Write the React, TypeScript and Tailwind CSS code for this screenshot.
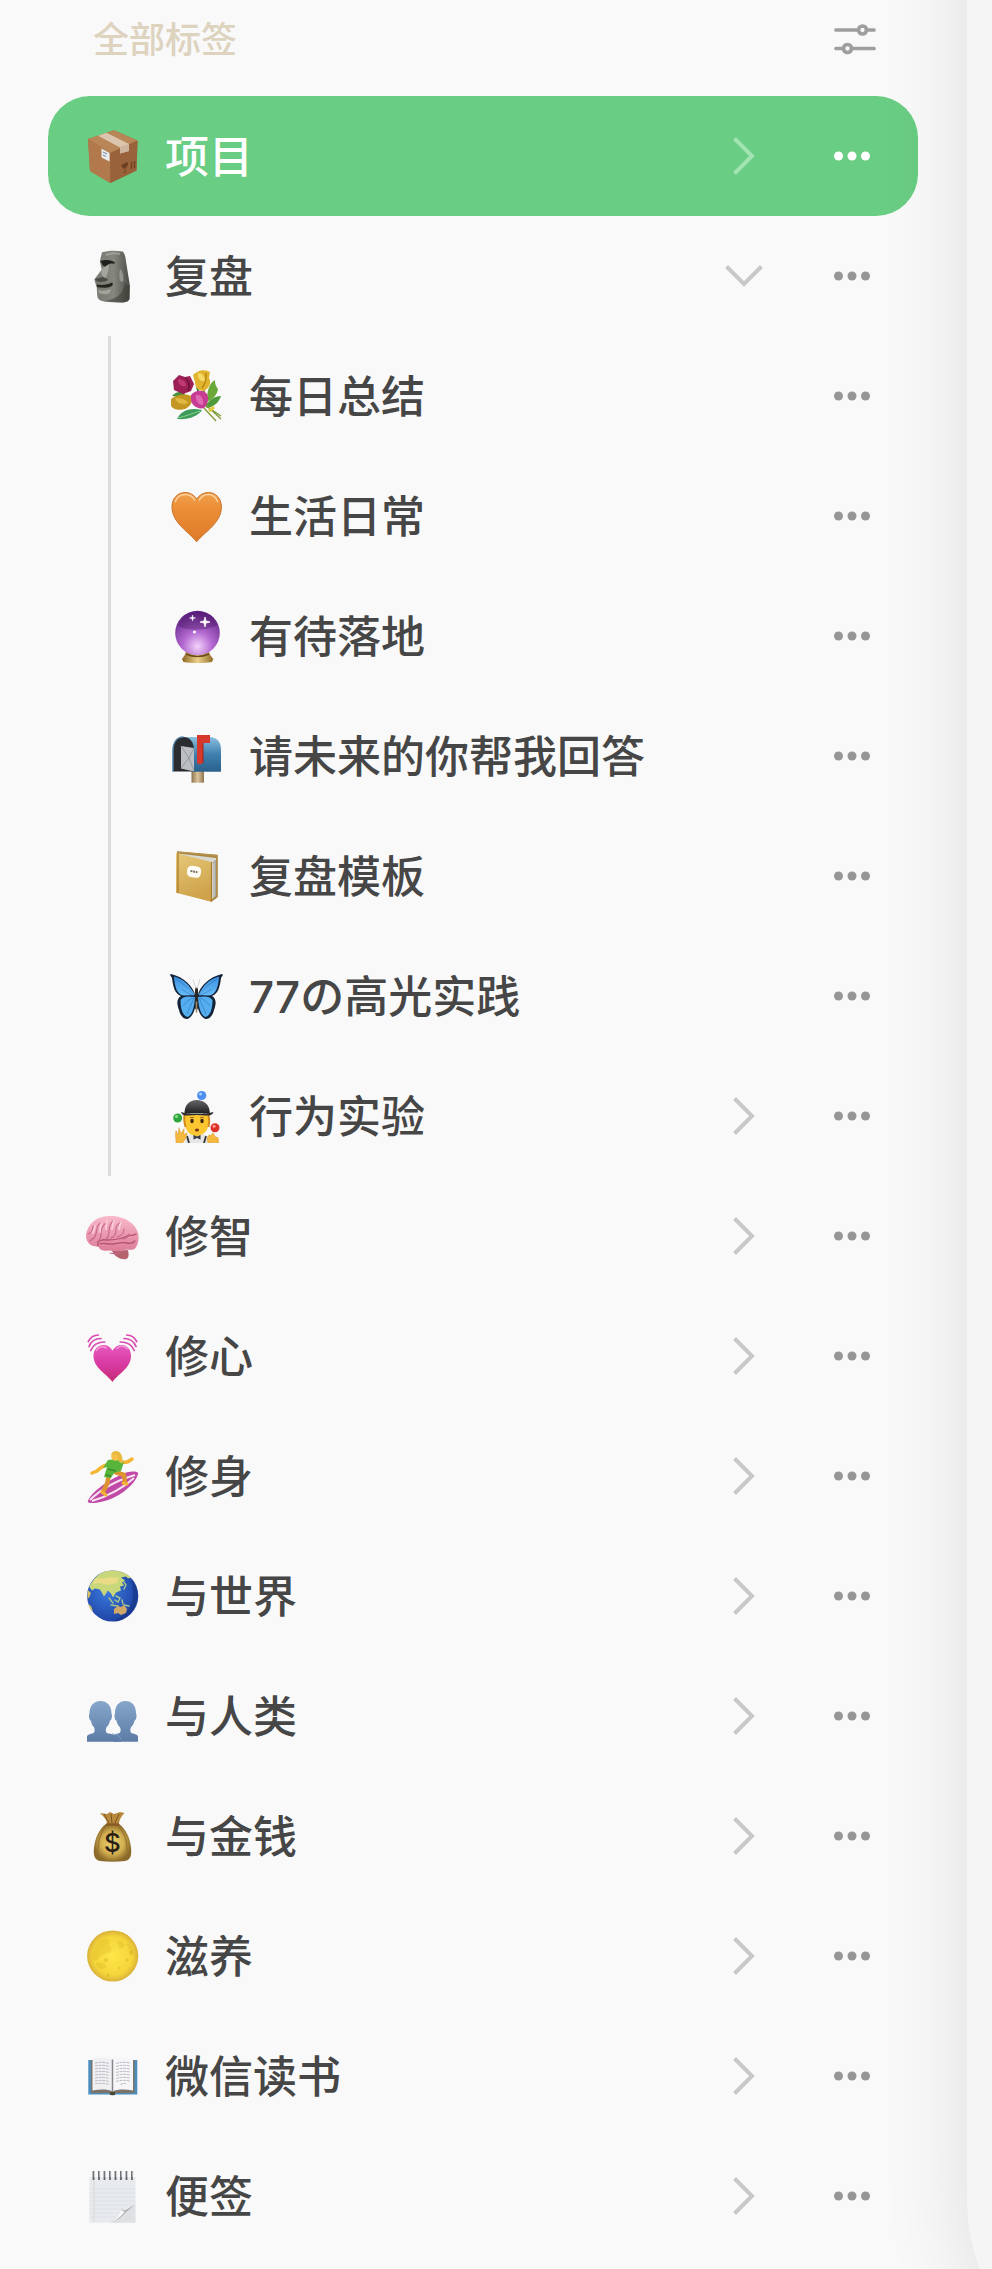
import React, { useState } from 'react';

type IconProps = { className?: string };

type Tag = {
  id: string;
  name: string;
  icon: React.ReactNode;
  expandable?: boolean;
  children?: Tag[];
};

const PackageIcon = () => (
  <>
    <path d="M2 10 28 1.3 51.5 11.5 50.5 41.5 24.300 54 4 42Z" fill="#a06a42" />
    <path d="M2 10 28 1.3 51.5 11.5 24.3 24Z" fill="#b98658" />
    <path d="M2 10 24.3 24V54L4 42Z" fill="#b27a4c" />
    <path d="M24.3 24 51.5 11.5 50.5 41.5 24.3 54Z" fill="#99623a" />
    <path d="m12 6.800 8.500-3L43 15v7l-9 2.500v-6Z" fill="#dcc5ad" />
    <path d="m34 18 9-3v7l-9 2.500Z" fill="#cdb49b" />
    <path d="m15.500 19.500 8 4.500v8.500l-8-4Z" fill="#e9ecf0" />
    <path d="m17 23 4 2m-4 1 3 1.500" stroke="#8795a8" strokeWidth="1.200" />
    <path d="m36 36 5.500-2.500c0 3.500-1 5-2.700 5.500s-2.800-1-2.800-3Zm3 3v4.500m-1.500.7 3-1.400" fill="#6b3f22" stroke="#6b3f22" strokeWidth=".8" />
    <path d="M45.500 33v7m3-8v7" stroke="#6b3f22" strokeWidth="1.300" />
  </>
);

const MoaiIcon = () => (
  <>
    <path d="M16 3.300c6-2 14-2 20.500-.7 2.500 2 3 6 3.500 10l3.800 23.500-.3 14c-1.500 3-4 3.400-7 3.400-7 0-14 0-20.500-1.500-3-1-4.500-2.500-4.700-5l-.5-8-2.500-8.500 7.500-10-2-8Z" fill="url(#stone)" />
    <path d="M14.500 12c6-2 10-1 14 1v2c-4-1-5-.5-6 1.500-2 2-4 1.500-6-.5Z" fill="#1f201d" />
    <path d="M23 15c0 7-2 11-4 15l-3-4-1-3 2-4Z" fill="#a3a59e" />
    <path d="m9 30 8-2c2 1 4 1 5 3-3 2-8 2.500-11 1.500Z" fill="#4a4b45" />
    <path d="M11 35.500c5 1 11 0 15-2 2 2 0 3.500-2 4.500-3 1-9 1-13 0Z" fill="#24251f" />
    <path d="M12 41c6 1.500 10 0 13-1l-1 4c-4 2-8 1-11 0Z" fill="#a2a399" />
    <path d="M34 20c3 2 4 8 3 13l-3-1c-1-4-1-8 0-12Z" fill="#93958f" />
    <path d="M39 34c2 3 3 3 4.800 2l-.3 14c-2 4-8 3.500-12 3.300l-15-1C28 51 37 47 39 34Z" fill="#34352e" opacity=".5" />
    <path d="M20 6c5-2 10-2 14-1" stroke="#a9aba5" strokeWidth="2" fill="none" opacity=".7" />
  </>
);

const BouquetIcon = () => (
  <>
    <path d="M37 31c0-8 2-17 8-20 0 5 1 6 3 9-1 6-5 10-11 13Z" fill="#6aa83a" />
    <path d="M35 37c4-6 10-10 16-10-2 6-7 11-14 12Z" fill="#4f9a3a" />
    <path d="M2 27c3-4 8-5 12-4l2 6Z" fill="#4a8f3c" />
    <path d="M7 50c4-8 12-12 25-9-4 6-13 10-25 9Z" fill="#3d9c5c" />
    <path d="M8 49c8-2 13-4 22-7" stroke="#8fd08a" fill="none" />
    <path d="m33 38 13 14m-10-15 15 10m-15-11 15 14" stroke="#7f9b34" strokeWidth="1.300" />
    <path d="m39 42 5-4" stroke="#e3c93c" strokeWidth="3" />
    <path d="M27 18l4 14m3-12-1 10" stroke="#3f7f33" strokeWidth="2" />
    <path d="M3 12 9 6l6 2 5-1 4 8-3 7-8 3-9-4Z" fill="#9c1f56" />
    <path d="M8 10c4 0 8 2 8 7-4 1-8-1-8-7Z" fill="#c23a73" />
    <path d="M15 9c4 3 5 8 3 13" stroke="#6d103a" strokeWidth="1.500" fill="none" />
    <path d="M23 6c5-5 11-6 17-3l-1 6c3 5 0 10-5 13-6 0-9-4-9-9Z" fill="#e0b42f" />
    <path d="M28 4c4 0 7 3 7 8-4 1-8-2-7-8Z" fill="#f4d865" />
    <path d="M36 4c0 6 0 10-4 15" stroke="#b8860f" strokeWidth="1.400" fill="none" />
    <path d="M1 30c5-4 13-6 20-3 3 5-1 11-6 13-6 2-14 0-14-4Z" fill="#c49622" />
    <path d="M5 29c5 0 11 1 13 5-5 2-11 1-13-5Z" fill="#e0b843" />
    <path d="M21 26c4-5 12-6 16-1 2 5 1 10-3 14-7 2-13-4-13-8Z" fill="#c63c93" />
    <path d="M26 26c5-1 8 4 7 10-5 0-8-5-7-10Z" fill="#e069b4" />
  </>
);

const OrangeHeartIcon = () => (
  <>
    <path d="M26.700 52.700C19 43 2 34 2 18 2 9 8 3.500 15 3.500c5 0 9 2.500 11.700 6.500 2.700-4 6.700-6.500 11.700-6.500 7 0 13 5.500 13 14.500 0 16-17 25-24.700 34.700Z" fill="url(#orangeHeart)" stroke="#c9732a" strokeWidth="1" />
    <path d="M5 13C7 8 11 5.500 15 5.500c4.500 0 8 2 10 6M29 11.500c2-4 5-6 9.500-6 4.500 0 7.500 3 9.500 7.500" fill="none" stroke="#fbd09b" strokeWidth="1.500" />
  </>
);

const CrystalBallIcon = () => (
  <>
    <path d="M12 50c2-3 4-5 4-8h23c0 3 2 5 4.300 8l-1.300 3c-9 1.300-20 1.300-28.500 0Z" fill="url(#gold)" />
    <circle cx="27.500" cy="24" r="22.300" fill="url(#orb)" />
    <path d="M8 17C12 6 20 3 28 3s15 3 19 13c-8 5-28 7-39 1Z" fill="#3c0d52" opacity=".3" />
    <path d="m35 8 1 4 4 1-4 1-1 4-1-4-4-1 4-1Z" fill="#fff" stroke="#fff" strokeWidth=".8" />
    <path d="m22.500 6 .6 2.400 2.400.6-2.400.6-.6 2.400-.6-2.400-2.400-.6 2.400-.6Z" fill="#fff" stroke="#fff" strokeWidth=".5" />
    <circle cx="24.500" cy="23" r="1.600" fill="#fff" />
    <path d="M16 45c7 3 16 3 23 0" stroke="#6b4a16" strokeWidth="1.500" fill="none" />
  </>
);

const MailboxIcon = () => (
  <>
    <path d="M21.500 42h12.500v11.700H21.500Z" fill="url(#wood)" />
    <path d="M13 8h26c8 0 12 5 12 13v21.700H22Z" fill="url(#mail)" />
    <path d="M3 42.500V22C3 13 7 8 13.500 8S24 13 24 22v20.500Z" fill="#2a2c2f" />
    <path d="M3 42.500V22C3 13 7 8 13.500 8" stroke="#4f7fa5" strokeWidth="1.500" fill="none" />
    <path d="M11 17 24 19v23.500l-13-3Z" fill="#bcbfc2" />
    <path d="m11 17 8 12-8 10M24 19l-5 10 5 13" stroke="#8d9196" strokeWidth=".8" fill="none" />
    <path d="M27 6h13v8h-7v20l-3 1.500-3-1.500Z" fill="#d6392b" />
    <path d="M33 14v20" stroke="#a32219" fill="none" />
  </>
);

const NotebookIcon = () => (
  <>
    <path d="M7 2.500 47.500 6v42.300l-6 4.400L8 43Z" fill="#a98642" />
    <path d="m8 4.500 38 4.500v37.500L41 51Z" fill="#d9d9d4" />
    <path d="m42.500 14 3-2.500v36m-1.500-35v36" stroke="#9b9b96" fill="none" strokeWidth=".8" />
    <path d="m6 4 35.700 9v39.700L6 43.700Z" fill="url(#cover)" />
    <path d="M8 4.500v39.500M41.500 13v39.500" stroke="#a97b2b" strokeWidth="1.200" />
    <path d="M7 3 47 6.500v41.800" stroke="#b4914c" strokeWidth="1.500" fill="none" />
    <rect x="17" y="17" width="14" height="11.500" rx="4.500" fill="#fffdf6" transform="rotate(8 24 23)" />
    <path d="m20.500 22 7 1.200" stroke="#77736a" strokeWidth="2" strokeDasharray="2 .7" />
  </>
);

const ButterflyIcon = () => (
  <>
    <path d="M25.500 27C23 17 14 8 1 5c-2 1 0 2 1 4 1 9 3 16 9 18-5 3-4 9-2 14 1 5 4 9 8 9 5-1 9-9 9.500-21Zm2 0C30 17 39 8 52 5c2 1 0 2-1 4-1 9-3 16-9 18 5 3 4 9 2 14-1 5-4 9-8 9-5-1-9-9-9.500-21Z" fill="#142237" />
    <path d="M25 26C20 17 14 10 4 7.500 4.500 17 7 26 14 26.500Zm3.500 0C33 17 39 10 49 7.500 48.500 17 46 26 39 26.500Z" fill="url(#wing)" />
    <path d="M25 28c-7-1-12-1-14.500 3 0 8 2 16 7 17 4-1 7-9 7.500-20Zm3 0c7-1 12-1 14.500 3 0 8-2 16-7 17-4-1-7-9-7.500-20Z" fill="#55aef0" />
    <path d="M24 26C18 19 13 14 6 10m18 17c-6-3-9-4-12-7m12 9c-3 7-5 11-7 16m6-16c-5 2-7 4-10 8M29 26c6-7 11-12 18-16M29 27c6-3 9-4 12-7M29 29c3 7 5 11 7 16m-6-16c5 2 7 4 10 8" stroke="#2f74b4" strokeWidth=".6" fill="none" />
    <path d="M26.500 20v19" stroke="#2b2924" strokeWidth="3" strokeLinecap="round" />
    <path d="M26.500 33v10" stroke="#9b8b6b" strokeWidth="1.500" strokeLinecap="round" />
    <path d="m26 20-3-10m4 10 3-10" stroke="#b5bcbe" strokeWidth=".6" />
  </>
);

const JugglerIcon = () => (
  <>
    <path d="M15 54c0-6 2-8 7-9h10c5 1 7 3 7 9Z" fill="#e6e6e6" />
    <path d="m17 47 2 7m17-7-2 7" stroke="#333" strokeWidth="1.800" />
    <path d="M15 25h23.500v9c0 8-6 13-12 13S15 42 15 34Z" fill="#fbc62f" />
    <path d="M14.500 26c-1 4 0 8 1 12M38.500 26c1 4 1 8 0 12" stroke="#d28a1c" strokeWidth="2" fill="none" />
    <path d="M14.500 24c0-8 5-13 12.300-13s13 5 13 13Z" fill="url(#hat)" />
    <path d="M11 23c5 2 26 2 32.500 0-1 3-4 4-8 3.500-6-.7-12-.7-17 0-4 .5-6.500-.5-7.500-3.500Z" fill="#2d2d2f" />
    <ellipse cx="22" cy="32" rx="1.700" ry="2.300" fill="#3b2413" />
    <ellipse cx="32" cy="32" rx="1.700" ry="2.300" fill="#3b2413" />
    <path d="M20 29q2-1.500 4 0m6 0q2-1.500 4 0" stroke="#9c6417" fill="none" />
    <ellipse cx="27" cy="41" rx="2" ry="1.500" fill="#7c2f1a" />
    <path d="m23.500 46 3.500 1.500 3.500-1.500v4.500L27 49l-3.500 1.500Z" fill="#3a3b40" />
    <path d="M6 53.700c0-5-1-9 0-12l2 4 1-7 2 6 3-5v6l3-2c0 5-3 8-4 10Zm32 0c-1-3-1-7 2-8l1 1 2-3 2 4 3 1 .7 5Z" fill="#f5b93e" stroke="#d99328" strokeWidth=".5" />
    <circle cx="31.700" cy="6.500" r="4.600" fill="#4d8ff0" />
    <circle cx="7.700" cy="29" r="4.500" fill="#2fa53e" />
    <circle cx="45" cy="38.700" r="4.500" fill="#dc3129" />
    <circle cx="30.500" cy="5" r="1.500" fill="#a9ccff" />
    <circle cx="6.500" cy="27.500" r="1.500" fill="#8ee08f" />
    <circle cx="44" cy="37.200" r="1.500" fill="#ff9d95" />
  </>
);

const BrainIcon = () => (
  <>
    <path d="M26 42c3 6 9 9 14 8 3-1 3-4 2-9Z" fill="#b5626f" />
    <path d="M0 26C2 14 11 7 24 7c15 0 27 8 28.500 19 .5 6-1 11-4 14-3 1-5 1-8 .5-6 2-12 2-17 1-5 1-10 0-11-4-5 0-9-1-11-5C.5 31 0 29 0 26Z" fill="url(#brain)" />
    <path d="M12 37c-1-5 4-7 9-6 8 0 14-1 20-4 4-1 7 0 9-2M14 35c5-2 9 1 14 0s9-2 13-1 6 0 8-2" stroke="#b5536f" strokeWidth="1.300" fill="none" strokeLinecap="round" />
    <path d="M2 25c3-1 5-4 5-8m-3 15c3-2 5-3 6-7 1-5 0-7 4-11m-3 19c3-2 4-4 4-8s1-8 5-11m-1 17c3-2 4-5 4-9s1-7 4-10m-2 17c4-1 5-5 5-9 0-3 2-5 4-6m-3 14c4-1 7-4 7-8m-2 10c4 0 6-2 7-5m-19 19c4 1 8 1 11-1" stroke="#c4678a" strokeWidth="1.100" fill="none" strokeLinecap="round" />
    <path d="M9 17c0 3-2 4-2 7m8-9c-1 4-1 5-1 8m7-11c-1 3-1 5-1 8m8-8c-2 3-1 5-2 8m9-6c-2 2-1 4-2 6" stroke="#ffd6df" strokeWidth="1.800" fill="none" strokeLinecap="round" opacity=".8" />
  </>
);

const BeatingHeartIcon = () => (
  <>
    <path d="M26.500 53C21 45 7.500 39 7.500 27 7.500 20 12 16 17.500 16c4 0 7 2 9 5.500 2-3.500 5-5.500 9-5.500C41 16 45 20 45 27c0 12-13 18-18.500 26Z" fill="url(#pinkHeart)" />
    <path d="M10.500 21.500c2-4 6-4.500 9.500-2.500m11 .5c3-3 7-3 10 0" stroke="#f29ad6" strokeWidth="1.500" fill="none" strokeLinecap="round" />
    <path d="M2.300 12.500c2-4 5-6.500 10-6.500M3 17.500c2-5 6-8 12-8M4.700 21.500c2-5 7-8.500 14-8.500M50.700 12.500c-2-4-5-6.500-10-6.500m9.300 11.500c-2-5-6-8-12-8m10.300 12c-2-5-7-8.500-14-8.500" stroke="#d94bb0" strokeWidth="1.700" fill="none" strokeLinecap="round" />
  </>
);

const SurferIcon = () => (
  <>
    <path d="M1.700 53c2-8 18-21 35-28 7-3 13-3 15.600-1C51 31 42 42 27 49c-11 5-23 6-25.300 4Z" fill="#c04aa6" />
    <path d="M4 51c9-9 25-19 45-25M6 52c13-4 30-12 42-23" stroke="#f7e3f1" strokeWidth="2" fill="none" />
    <path d="M24 15c-6 1-10 4-13 7l-5 2M36 13c4 1 6 0 10-3" stroke="#f4b533" strokeWidth="3.500" strokeLinecap="round" fill="none" />
    <path d="m23 26-2 9-4 8m12-20 9 3 1 8" stroke="#dd9430" strokeWidth="4.500" strokeLinecap="round" strokeLinejoin="round" fill="none" />
    <path d="m22 11 8-1 8 3-3 9-7 2-3 5-7-1 3-10-4 1Z" fill="#58b53c" />
    <path d="m22 20 8 2m-10 4 5 1" stroke="#3a8b2a" strokeWidth="1.300" />
    <circle cx="29.500" cy="7.500" r="4.300" fill="#f8c24a" />
    <path d="M25 6c1-5 8-5 10-1 2 3 1 6 2 9-4 1-5-3-5-7-2-2-4-2-7-1Z" fill="#e8b93f" />
    <path d="m16 43 4 3m17-12 4 1" stroke="#f4b533" strokeWidth="3" strokeLinecap="round" />
  </>
);

const GlobeIcon = () => (
  <>
    <circle cx="26.700" cy="27" r="25.600" fill="url(#sea)" />
    <path d="M4 16C10 5 19 1 28 1.500c7 .5 13 3 17 7l-3 1-2-2-5 1 4 3-3 2 2 3-4 1 1 4-5 2-3 5-2-4-3-3-4 6-4-7-5-1-3 2-3-4Z" fill="#c9d77b" />
    <path d="M9 10c6-2 9 1 14-2l10 1-2 5-9 2-9-2-6 1Z" fill="#eadb86" />
    <path d="M1.800 21 5 24l-2 5-1.500-.5ZM2 35l3 2 2 5-2-1Z" fill="#d7bf63" />
    <path d="m38 13 2 3-2 4m-15 9 4 5m3-7 4 2-2 4-3-2m7 0 1 4m-12 1 7 1m6-1 5 1" stroke="#a8c489" strokeWidth="1.400" fill="none" strokeLinecap="round" />
    <path d="m28 40 4-3 3 1 3-2 3 4-1 4-5 2-3-2-4 1Z" fill="#d2a869" />
    <path d="M45 8.500c5 5 7 12 6.500 19-1 14-12 25-25 25 10-4 19-12 20-23 1-8 0-15-1.500-21Z" fill="#14296e" opacity=".4" />
  </>
);

const PeopleIcon = () => (
  <>
    <path d="M52 52.700V47.500c0-1.500-3-2.500-6-3.200-2-.6-2-4-1-6 2-2 3-4 3.500-6.500 2-1 2.500-5 1.500-7.500 0-7.500-4-12.300-10.500-12.300S29 16.800 29 24.300c-1 2.500-.5 6.500 1.500 7.500.5 2.500 1.500 4.500 3.500 6.500 1 2 1 5.400-1 6-3 .7-6 1.700-6 3.200v5.200Z" fill="url(#person)" />
    <path d="M1 52.700V47.500c0-1.500 3-2.500 6-3.200 2-.6 2-4 1-6-2-2-2.500-4-3-6.500-2-1-2.500-5-1.500-7.500 0-7.500 4.500-12.300 11-12.300s11 4.800 11 12.300c1 2.500.5 6.500-1.500 7.500-.5 2.500-1.500 4.500-3.500 6.500-1 2-1 5.400 1 6 6 .7 10 2.700 12 3.700 1.500 1 1.500 2.500 1.500 4.700Z" fill="url(#person)" />
    <path d="M26 44.800c5 .7 8 2 9 6" stroke="#8aa5c6" strokeWidth=".8" fill="none" />
  </>
);

const MoneyBagIcon = () => (
  <>
    <path d="m14 4 7 1 3-2 4 2 6-2 4.500 1C35 8 33 11 33 15H21c0-4-3-7-7-11Z" fill="#b98a3d" />
    <path d="m18 5 5 9m2-9 1 9m7-9-4 9" stroke="#7d5522" strokeWidth="1" />
    <path d="M20 15h13c7 5 11 14 12 24 1 8-1 12-6 13-8 1-17 1-25 0-5-1-7-5-6-13 1-10 5-19 12-24Z" fill="url(#bag)" />
    <path d="M20 17c-5 6-8 15-8 26m20-26c6 6 9 14 9 25" stroke="#8b6726" strokeWidth=".8" fill="none" />
    <path d="M21 15.500h11" stroke="#8a5a25" strokeWidth="2.500" strokeLinecap="round" />
    <text x="26.500" y="43" textAnchor="middle" fontFamily="Inter, sans-serif" fontWeight="500" fontSize="26" fill="#2b2117">$</text>
  </>
);

const MoonIcon = () => (
  <>
    <circle cx="26.700" cy="27" r="25.600" fill="url(#moon)" />
    <path d="M9 19c3-7 8-10 13-9 3 3 0 5 2 8 4 2 1 6-3 6-3 3-6 1-8 5s-6 3-7-2Zm22-6c4-3 7 0 8 4l-5 3Zm9 1c5 2 7 6 8 11l-4-2Zm-30 20c5-2 9 0 11 4l-4 2c-4 0-7-2-7-6Z" fill="#c99e1b" opacity=".2" />
    <g fill="#b98c12" opacity=".25">
      <circle cx="41" cy="31" r="1.500" />
      <circle cx="45" cy="24" r="2" />
      <circle cx="22" cy="46" r="1.500" />
      <circle cx="33" cy="39" r="1" />
      <circle cx="20" cy="31" r="2" />
    </g>
  </>
);

const BookIcon = () => (
  <>
    <path d="M2.300 11h49v34.500H30l-3.500 1-3.500-1H2.300Z" fill="#4b8dbd" />
    <path d="M5 11h43.500v33H30l-3.500 2-3.500-2H5Z" fill="#7c746b" />
    <path d="M6.500 9.500C14 8 22 8 26.500 10.500v32C22 40 14 40 6.500 41.500Z" fill="#f0f0f3" />
    <path d="M47 9.500C39.500 8 31.500 8 26.500 10.500v32C31.500 40 39.500 40 47 41.500Z" fill="#f6f6f8" />
    <path d="M26.500 10.500v32" stroke="#85858a" strokeWidth="1.500" />
    <path d="M9 14c5-1 9-1 14 .5M9 17c5-1 9-1 14 .5M9 20c5-1 9-1 14 .5M9 23c5-1 9-1 14 .5M9 26c5-1 9-1 14 .5M9 29c5-1 9-1 14 .5M9 32c5-1 9-1 14 .5M9 35c5-1 9-1 14 .5m7-21c5-1.500 9-1.500 14-.5m-14 3.500c5-1.500 9-1.500 14-.5m-14 3.500c5-1.500 9-1.500 14-.5m-14 3.500c5-1.500 9-1.500 14-.5m-14 3.500c5-1.500 9-1.500 14-.5m-14 3.500c5-1.500 9-1.500 14-.5m-14 3.500c5-1.500 9-1.500 14-.5m-10 3.500c3-1 4-1 6-1" stroke="#b4b5c0" strokeWidth=".9" fill="none" strokeDasharray="3 .6" />
    <path d="M24 43h5v3h-5Z" fill="#4e4a2f" />
  </>
);

const NotepadIcon = () => (
  <>
    <path d="M3.500 8h46v28L32 53.700H3.500Z" fill="#e8ebee" />
    <path d="M8 8v45" stroke="#dccfd3" strokeWidth=".8" />
    <path d="M3.500 20h46m-46 4h46m-46 4h46m-46 4h46m-46 4h42m-42 4h33m-33 4h31m-31 4h26" stroke="#d8dde3" strokeWidth=".7" />
    <path d="M26 53.700c6-3 9-6 12-10 3-3 7-5 11.500-8v18Z" fill="#dfe0e3" />
    <path d="M24 53.700c8-4 9-10 12-15 1 3 2 3 4 2 4-2 7-4 9.500-8-2 4-5 7-9 10-4 4-8 9-16.500 11Z" fill="#b0b2b6" />
    <path d="M24 53.700c8-4 9-10 12-15 0 3 1 4 3 4-4 4-8 9-15 11Z" fill="#f7f7f8" />
    <path d="M7.500 2v9m5.500-9v9m5.500-9v9m5.500-9v9m5.500-9v9m5.500-9v9m5.500-9v9m5.500-9v9" stroke="#606368" strokeWidth="1.800" />
    <path d="M8.300 2v6m5.500-6v6m5.500-6v6m5.500-6v6m5.500-6v6m5.500-6v6m5.500-6v6m5.500-6v6" stroke="#d8dade" strokeWidth=".8" />
  </>
);

const tags: Tag[] = [
  { id: 'project', name: '项目', icon: <PackageIcon />, expandable: true },
  {
    id: 'review',
    name: '复盘',
    icon: <MoaiIcon />,
    expandable: true,
    children: [
      { id: 'daily', name: '每日总结', icon: <BouquetIcon /> },
      { id: 'life', name: '生活日常', icon: <OrangeHeartIcon /> },
      { id: 'pending', name: '有待落地', icon: <CrystalBallIcon /> },
      { id: 'future', name: '请未来的你帮我回答', icon: <MailboxIcon /> },
      { id: 'template', name: '复盘模板', icon: <NotebookIcon /> },
      { id: 'highlight', name: '77の高光实践', icon: <ButterflyIcon /> },
      { id: 'experiment', name: '行为实验', icon: <JugglerIcon />, expandable: true },
    ],
  },
  { id: 'wisdom', name: '修智', icon: <BrainIcon />, expandable: true },
  { id: 'heart', name: '修心', icon: <BeatingHeartIcon />, expandable: true },
  { id: 'body', name: '修身', icon: <SurferIcon />, expandable: true },
  { id: 'world', name: '与世界', icon: <GlobeIcon />, expandable: true },
  { id: 'people', name: '与人类', icon: <PeopleIcon />, expandable: true },
  { id: 'money', name: '与金钱', icon: <MoneyBagIcon />, expandable: true },
  { id: 'nourish', name: '滋养', icon: <MoonIcon />, expandable: true },
  { id: 'weread', name: '微信读书', icon: <BookIcon />, expandable: true },
  { id: 'notes', name: '便签', icon: <NotepadIcon />, expandable: true },
];

// Gradients shared by the tag icons
function Gradients() {
  return (
    <svg className="absolute size-0" aria-hidden="true">
      <defs>
        <linearGradient id="stone"><stop stopColor="#777970" /><stop offset=".55" stopColor="#85877f" /><stop offset="1" stopColor="#4b4c46" /></linearGradient>
        <linearGradient id="orangeHeart" x2="0" y2="1"><stop stopColor="#f0a04c" /><stop offset=".3" stopColor="#ec8f38" /><stop offset="1" stopColor="#de7a28" /></linearGradient>
        <radialGradient id="orb" cy=".8" r=".8"><stop stopColor="#f3d3fa" /><stop offset=".4" stopColor="#b56bd2" /><stop offset="1" stopColor="#5d1f82" /></radialGradient>
        <linearGradient id="gold"><stop stopColor="#8a6420" /><stop offset=".5" stopColor="#ecd28c" /><stop offset="1" stopColor="#8f6a25" /></linearGradient>
        <linearGradient id="wood"><stop stopColor="#8d7350" /><stop offset=".5" stopColor="#dcc59c" /><stop offset="1" stopColor="#8d7350" /></linearGradient>
        <linearGradient id="mail" x2="0" y2="1"><stop stopColor="#8cbfe0" /><stop offset=".5" stopColor="#3f80ae" /><stop offset="1" stopColor="#2a608c" /></linearGradient>
        <linearGradient id="cover" x2=".3" y2="1"><stop stopColor="#e6c878" /><stop offset="1" stopColor="#cfa24b" /></linearGradient>
        <linearGradient id="wing" x2="0" y2="1"><stop stopColor="#3b8fe0" /><stop offset="1" stopColor="#66bdf8" /></linearGradient>
        <linearGradient id="hat" x2="0" y2="1"><stop stopColor="#66666a" /><stop offset="1" stopColor="#222224" /></linearGradient>
        <linearGradient id="brain" x2="0" y2="1"><stop stopColor="#f9b9ca" /><stop offset="1" stopColor="#dc7d98" /></linearGradient>
        <linearGradient id="pinkHeart" x2="0" y2="1"><stop stopColor="#e65ac0" /><stop offset=".5" stopColor="#d93ba4" /><stop offset="1" stopColor="#c42a72" /></linearGradient>
        <radialGradient id="sea" cx=".4" cy=".4" r=".65"><stop stopColor="#3c7be0" /><stop offset="1" stopColor="#1c40a0" /></radialGradient>
        <linearGradient id="person" x2="0" y2="1"><stop stopColor="#86a7ca" /><stop offset="1" stopColor="#5c7ba6" /></linearGradient>
        <radialGradient id="bag"><stop stopColor="#ecd373" /><stop offset=".6" stopColor="#d3b050" /><stop offset="1" stopColor="#8b6a2a" /></radialGradient>
        <radialGradient id="moon"><stop stopColor="#ffe648" /><stop offset=".75" stopColor="#f5d63a" /><stop offset="1" stopColor="#d9b13a" /></radialGradient>
      </defs>
    </svg>
  );
}

function Chevron({ className }: IconProps) {
  return (
    <svg viewBox="0 0 40 40" fill="none" stroke="currentColor" strokeWidth="4" className={className}>
      <path d="M10.500 2.500 28 20 10.500 37.500" />
    </svg>
  );
}

function Dots({ className }: IconProps) {
  return (
    <svg viewBox="0 0 36 36" fill="currentColor" className={className}>
      <circle cx="4.500" cy="18" r="4.500" />
      <circle cx="18" cy="18" r="4.500" />
      <circle cx="31.500" cy="18" r="4.500" />
    </svg>
  );
}

function FilterIcon({ className }: IconProps) {
  return (
    <svg viewBox="0 0 42 32" fill="none" stroke="currentColor" strokeWidth="3.700" strokeLinecap="round" className={className}>
      <path d="M2 7h22m9 0h7M2 25.500h7m9 0h22" />
      <circle cx="28.500" cy="7" r="4" />
      <circle cx="13.500" cy="25.500" r="4" />
    </svg>
  );
}

type RowProps = {
  tag: Tag;
  selectedId: string;
  openIds: string[];
  onSelect: (id: string) => void;
  onToggle: (id: string) => void;
};

function TagRow({ tag, selectedId, openIds, onSelect, onToggle }: RowProps) {
  const isSelected = tag.id === selectedId;
  const isOpen = openIds.includes(tag.id) && !!tag.children;

  return (
    <li>
      <div className={`flex h-[120px] items-center rounded-[42px] pr-12 ${isSelected ? 'bg-[#69cd83] text-white' : 'text-[#464646]'}`}>
        <button onClick={() => onSelect(tag.id)} className="flex h-full min-w-0 flex-1 items-center gap-[25px] pl-[38px] text-left">
          <svg viewBox="0 0 54 54" className="size-[54px] shrink-0" aria-hidden="true">
            {tag.icon}
          </svg>
          <span className="truncate pt-[2px] text-[44px] leading-[64px] font-medium">{tag.name}</span>
        </button>
        {tag.expandable && (
          <button
            onClick={() => onToggle(tag.id)}
            aria-label={`展开${tag.name}`}
            aria-expanded={isOpen}
            className={`mr-[70px] shrink-0 ${isSelected ? 'text-[#a3e2b3]' : 'text-[#c8c8c8]'}`}
          >
            <Chevron className={`size-10 ${isOpen ? 'rotate-90' : ''}`} />
          </button>
        )}
        <button aria-label={`${tag.name}更多操作`} className={`shrink-0 ${isSelected ? 'text-white' : 'text-[#969696]'}`}>
          <Dots className="size-9" />
        </button>
      </div>
      {isOpen && (
        <ul className="ml-[60px] border-l-[3px] border-[#dcdcdc] pl-[21px]">
          {tag.children?.map((child) => (
            <TagRow key={child.id} tag={child} selectedId={selectedId} openIds={openIds} onSelect={onSelect} onToggle={onToggle} />
          ))}
        </ul>
      )}
    </li>
  );
}

function App() {
  const [selectedId, setSelectedId] = useState('project');
  const [openIds, setOpenIds] = useState<string[]>(['review']);

  const toggle = (id: string) => {
    setOpenIds((ids) => (ids.includes(id) ? ids.filter((i) => i !== id) : [...ids, id]));
  };

  return (
    <div className="flex min-h-screen overflow-hidden bg-[#f9f9f9] font-['Inter','Noto_Sans_CJK_SC',sans-serif]">
      <Gradients />
      <nav className="min-w-0 flex-1 pr-[49px] pl-12" aria-label="全部标签">
        <header className="mb-[18px] flex h-[78px] items-center justify-between pr-[42px] pl-[45px]">
          <h1 className="pt-[2px] text-[36px] leading-[48px] font-medium text-[#ddd3bf]">全部标签</h1>
          <button aria-label="筛选标签" className="text-[#9e9e9e]">
            <FilterIcon className="h-8 w-[42px]" />
          </button>
        </header>
        <ul>
          {tags.map((tag) => (
            <TagRow key={tag.id} tag={tag} selectedId={selectedId} openIds={openIds} onSelect={setSelectedId} onToggle={toggle} />
          ))}
        </ul>
      </nav>
      {/* edge of the note page peeking in from the right */}
      <main className="-mt-24 -mr-96 -mb-[130px] w-[409px] shrink-0 rounded-bl-[200px] bg-[#f5f5f5] shadow-[0_0_90px_rgba(0,0,0,0.11)]" />
    </div>
  );
}

export default App;
